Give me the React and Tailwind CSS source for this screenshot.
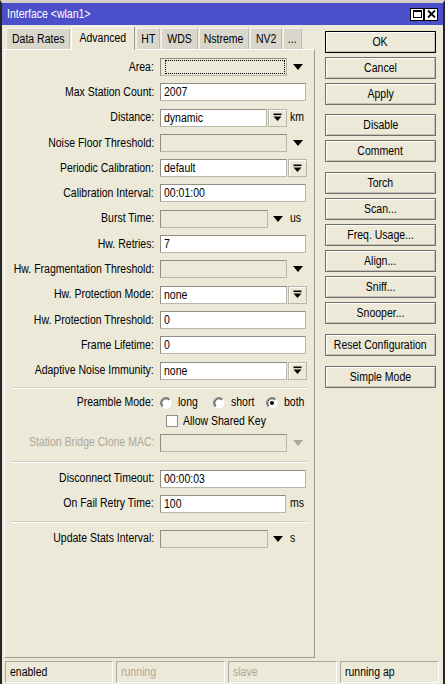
import React from 'react';

const FONT = "font-['Liberation_Sans',Arial,sans-serif]";

// narrow text: the dialog font is tall and condensed
function T({ children, o = 'origin-left' }) {
  return <span className={`inline-block whitespace-nowrap scale-x-[0.84] ${o}`}>{children}</span>;
}

function DropBtnIcon() {
  return (
    <svg width="9" height="9" viewBox="0 0 9 9">
      <rect x="0.5" y="0.5" width="8" height="1.6" fill="#000" />
      <polygon points="0.5,3.5 8.5,3.5 4.5,8" fill="#000" />
    </svg>
  );
}

function Arrow({ dim }) {
  return (
    <svg width="10" height="6" viewBox="0 0 10 6">
      <polygon points="0,0 10,0 5,6" fill={dim ? '#aca899' : '#000'} />
    </svg>
  );
}

function Field({ value = '', w = 'w-[146px]', disabled, focus }) {
  return (
    <div
      className={`${w} shrink-0 h-[18px] border border-[#b9b6aa] border-t-[#8f8d84] border-l-[#8f8d84] ${
        disabled ? 'bg-[#ece9d8]' : 'bg-white'
      } pl-[3px] leading-[16px] whitespace-nowrap overflow-hidden`}
    >
      {focus ? <div className="m-[1px] h-[14px] border border-dotted border-black" /> : <T>{value}</T>}
    </div>
  );
}

function DropBtn() {
  return (
    <div className="ml-px shrink-0 w-[19px] h-[18px] flex items-center justify-center border border-[#b9b6aa] bg-[#ece9d8] shadow-[inset_1px_1px_0_#fff]">
      <DropBtnIcon />
    </div>
  );
}

function Row({ label, dim, children, className = '' }) {
  return (
    <div className={`flex items-center h-[18px] ${className}`}>
      <div className={`w-[149px] shrink-0 flex justify-end ${dim ? 'text-[#aca899]' : 'text-black'}`}>
        <T o="origin-right">{label}</T>
      </div>
      <div className="ml-[6px] flex items-center">{children}</div>
    </div>
  );
}

function Sep({ className = '' }) {
  return <div className={`ml-[7px] w-[295px] border-t border-[#cfccbf] border-b border-b-white ${className}`} />;
}

function Radio({ checked }) {
  return (
    <svg width="12" height="12" viewBox="0 0 12 12" className="shrink-0">
      <circle cx="6" cy="6" r="5.5" fill="#fff" />
      <path d="M2.2 9.8 A5.2 5.2 0 0 1 9.8 2.2" fill="none" stroke="#808080" strokeWidth="1.2" />
      <path d="M3 9 A4.2 4.2 0 0 1 9 3" fill="none" stroke="#404040" strokeWidth="1" />
      {checked && <circle cx="6" cy="6" r="2" fill="#000" />}
    </svg>
  );
}

function Opt({ label, checked, w = 'w-[53px]' }) {
  return (
    <div className={`${w} shrink-0 flex items-center`}>
      <Radio checked={checked} />
      <span className="ml-[6px]">
        <T>{label}</T>
      </span>
    </div>
  );
}

function Btn({ children, def, className = '' }) {
  return (
    <div
      className={`h-[22px] w-[111px] flex items-center justify-center border ${
        def ? 'border-black' : 'border-[#6f6e69]'
      } bg-[#ece9d8] shadow-[inset_1px_1px_0_#fff,inset_-1px_-1px_0_#c4c1b5] ${className}`}
    >
      <T o="origin-center">{children}</T>
    </div>
  );
}

function Cell({ children, w, dim }) {
  return (
    <div
      className={`${w} h-[22px] border border-[#aca899] border-b-white border-r-white pl-[4px] leading-[20px] ${
        dim ? 'text-[#aca899]' : 'text-black'
      }`}
    >
      <T>{children}</T>
    </div>
  );
}

export default function App() {
  const tabs = [
    ['Data Rates', 'w-[64px]'],
    ['Advanced', 'w-[64px]', true],
    ['HT', 'w-[24px]'],
    ['WDS', 'w-[37px]'],
    ['Nstreme', 'w-[50px]'],
    ['NV2', 'w-[32px]'],
    ['...', 'w-[19px]'],
  ];

  return (
    <div
      className={`${FONT} text-[12.5px] w-[445px] h-[684px] bg-[#ece9d8] border-t-[3px] border-t-[#d4d0c8] border-x-2 border-x-[#262626] flex flex-col overflow-hidden`}
    >
      {/* Title bar */}
      <div className="h-[22px] bg-[#4b4fc9] flex items-center pl-[5px] pr-[5px]">
        <span className="text-white text-[12.5px]">
          <T>Interface &lt;wlan1&gt;</T>
        </span>
        <div className="ml-auto flex items-center">
          <div className="w-[14px] h-[13px] bg-white border border-black flex items-center justify-center">
            <div className="w-[9px] h-[8px] border border-black border-t-2" />
          </div>
          <div className="w-[14px] h-[13px] bg-white border border-black flex items-center justify-center">
            <svg width="9" height="8" viewBox="0 0 9 8">
              <path d="M1 0.5 L8 7.5 M8 0.5 L1 7.5" stroke="#000" strokeWidth="1.8" />
            </svg>
          </div>
        </div>
      </div>

      <div className="flex">
        {/* Left: tabs + panel */}
        <div className="ml-[2px] w-[311px] flex flex-col">
          <div className="h-[24px] flex items-end gap-px pl-[2px]">
            {tabs.map(([t, w, active]) =>
              active ? (
                <div
                  key={t}
                  className={`${w} h-[24px] -mb-px z-10 bg-[#ece9d8] border-l border-t border-white border-r border-r-[#9d9b92] flex items-center justify-center`}
                >
                  <T o="origin-center">{t}</T>
                </div>
              ) : (
                <div
                  key={t}
                  className={`${w} h-[21px] bg-[#d9d6cc] border-l border-t border-[#f4f2ea] border-r border-r-[#bdbab0] flex items-center justify-center`}
                >
                  <T o="origin-center">{t}</T>
                </div>
              )
            )}
          </div>
          <div className="h-[609px] border border-white border-r-[#9d9b92] border-b-[#9d9b92] pt-[8px]">
            <div className="flex flex-col gap-[7.3px]">
              <Row label="Area:">
                <Field w="w-[127px]" disabled focus />
                <div className="ml-[6px]"><Arrow /></div>
              </Row>
              <Row label="Max Station Count:">
                <Field value="2007" />
              </Row>
              <Row label="Distance:">
                <Field value="dynamic" w="w-[107px]" />
                <DropBtn />
                <span className="ml-[3px]"><T>km</T></span>
              </Row>
              <Row label="Noise Floor Threshold:">
                <Field w="w-[127px]" disabled />
                <div className="ml-[6px]"><Arrow /></div>
              </Row>
              <Row label="Periodic Calibration:">
                <Field value="default" w="w-[127px]" />
                <DropBtn />
              </Row>
              <Row label="Calibration Interval:">
                <Field value="00:01:00" />
              </Row>
              <Row label="Burst Time:">
                <Field w="w-[108px]" disabled />
                <div className="ml-[5px]"><Arrow /></div>
                <span className="ml-[7px]"><T>us</T></span>
              </Row>
              <Row label="Hw. Retries:">
                <Field value="7" />
              </Row>
              <Row label="Hw. Fragmentation Threshold:">
                <Field w="w-[127px]" disabled />
                <div className="ml-[6px]"><Arrow /></div>
              </Row>
              <Row label="Hw. Protection Mode:">
                <Field value="none" w="w-[127px]" />
                <DropBtn />
              </Row>
              <Row label="Hw. Protection Threshold:">
                <Field value="0" />
              </Row>
              <Row label="Frame Lifetime:">
                <Field value="0" />
              </Row>
              <Row label="Adaptive Noise Immunity:">
                <Field value="none" w="w-[127px]" />
                <DropBtn />
              </Row>
            </div>

            <Sep className="mt-[7px]" />

            <Row label="Preamble Mode:" className="mt-[6px] !h-[16px]">
              <Opt label="long" />
              <Opt label="short" />
              <Opt label="both" checked w="w-[40px]" />
            </Row>
            <div className="mt-[4px] h-[13px] flex items-center pl-[161px]">
              <div className="w-[12px] h-[12px] bg-white border border-[#8f8d84]" />
              <span className="ml-[5px]"><T>Allow Shared Key</T></span>
            </div>
            <Row label="Station Bridge Clone MAC:" dim className="mt-[6px]">
              <Field w="w-[127px]" disabled />
              <div className="ml-[6px]"><Arrow dim /></div>
            </Row>

            <Sep className="mt-[9px]" />

            <Row label="Disconnect Timeout:" className="mt-[7px]">
              <Field value="00:00:03" />
            </Row>
            <Row label="On Fail Retry Time:" className="mt-[7px]">
              <Field value="100" w="w-[126px]" />
              <span className="ml-[4px]"><T>ms</T></span>
            </Row>

            <Sep className="mt-[8px]" />

            <Row label="Update Stats Interval:" className="mt-[7px]">
              <Field w="w-[108px]" disabled />
              <div className="ml-[5px]"><Arrow /></div>
              <span className="ml-[7px]"><T>s</T></span>
            </Row>
          </div>
        </div>

        {/* Right: buttons */}
        <div className="ml-[10px] mt-[6px] flex flex-col">
          <Btn def>OK</Btn>
          <Btn className="mt-[4px]">Cancel</Btn>
          <Btn className="mt-[4px]">Apply</Btn>
          <Btn className="mt-[9px]">Disable</Btn>
          <Btn className="mt-[4px]">Comment</Btn>
          <Btn className="mt-[10px]">Torch</Btn>
          <Btn className="mt-[4px]">Scan...</Btn>
          <Btn className="mt-[4px]">Freq. Usage...</Btn>
          <Btn className="mt-[4px]">Align...</Btn>
          <Btn className="mt-[4px]">Sniff...</Btn>
          <Btn className="mt-[4px]">Snooper...</Btn>
          <Btn className="mt-[10px]">Reset Configuration</Btn>
          <Btn className="mt-[10px]">Simple Mode</Btn>
        </div>
      </div>

      {/* Status bar */}
      <div className="mt-[3px] ml-[3px] flex gap-[3px]">
        <Cell w="w-[108px]">enabled</Cell>
        <Cell w="w-[109px]" dim>running</Cell>
        <Cell w="w-[109px]" dim>slave</Cell>
        <Cell w="w-[99px]">running ap</Cell>
      </div>
    </div>
  );
}
